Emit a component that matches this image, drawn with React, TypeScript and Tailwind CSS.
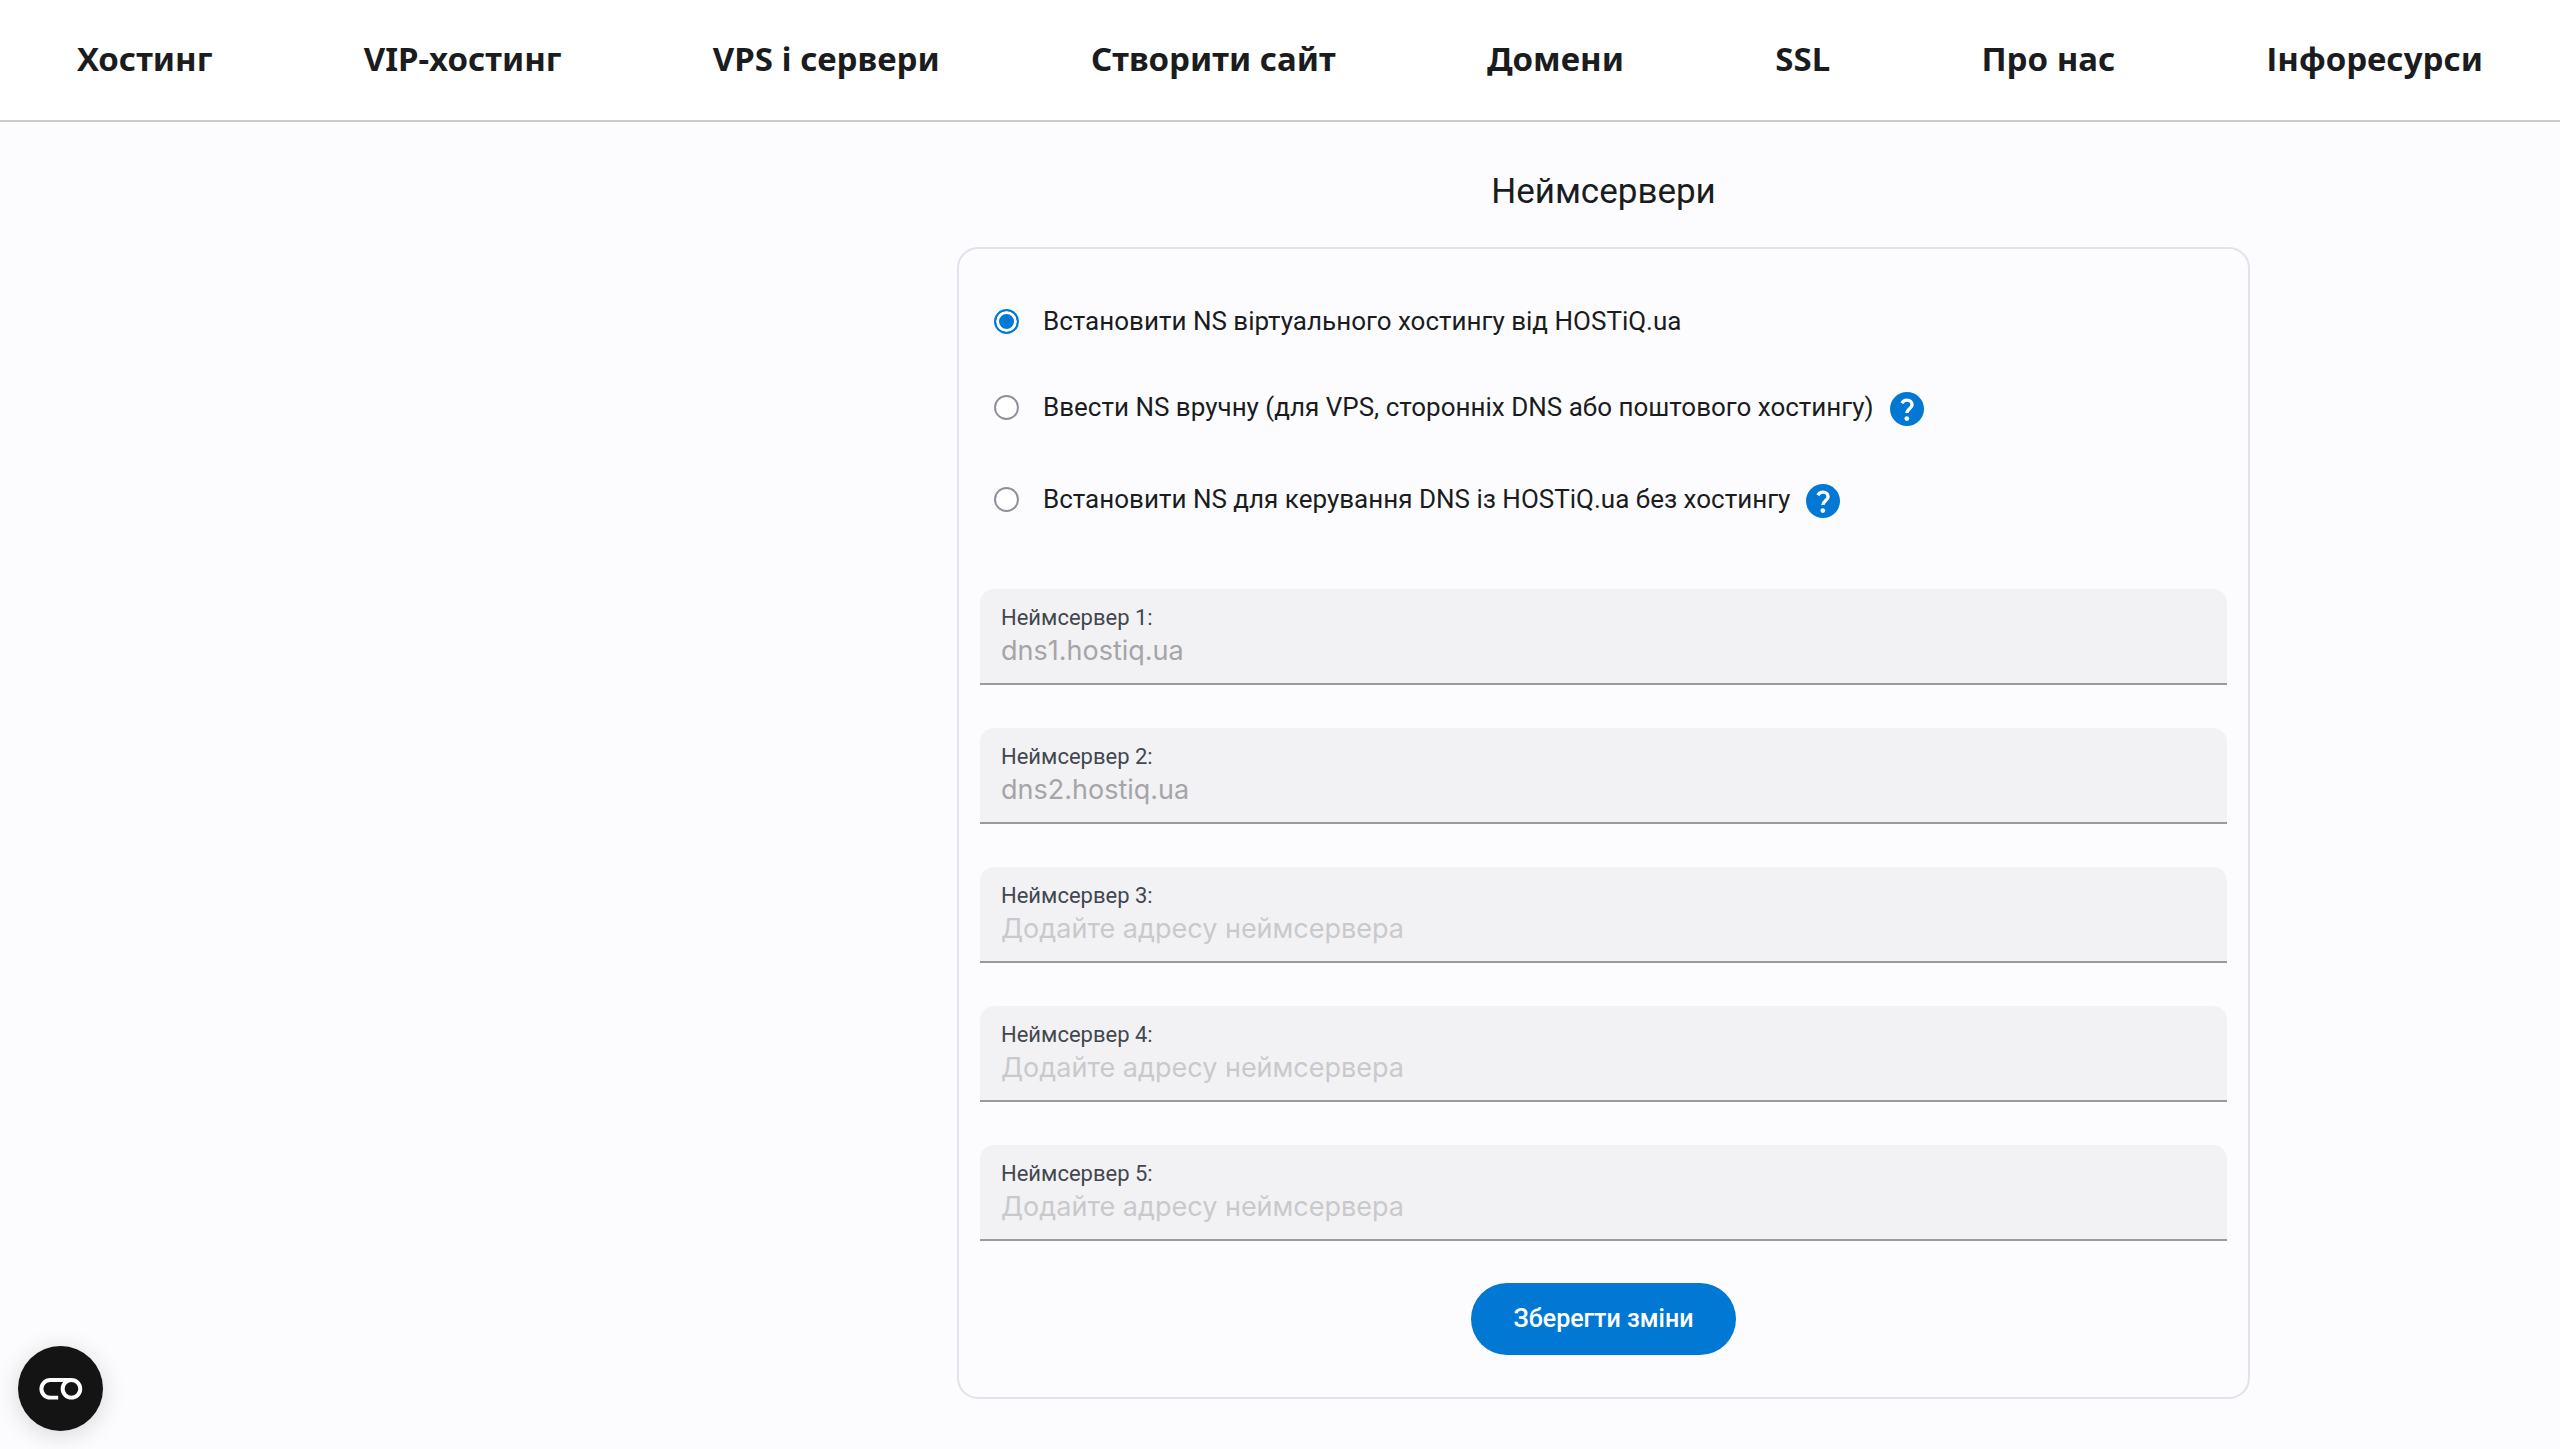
import React from 'react'

const navLinks = [
  'Хостинг',
  'VIP-хостинг',
  'VPS і сервери',
  'Створити сайт',
  'Домени',
  'SSL',
  'Про нас',
  'Інфоресурси',
]

const nsOptions = [
  { id: 'shared', label: 'Встановити NS віртуального хостингу від HOSTiQ.ua', help: false },
  { id: 'manual', label: 'Ввести NS вручну (для VPS, сторонніх DNS або поштового хостингу)', help: true },
  { id: 'dns', label: 'Встановити NS для керування DNS із HOSTiQ.ua без хостингу', help: true },
]

const defaultServers = ['dns1.hostiq.ua', 'dns2.hostiq.ua', '', '', '']

const HelpIcon = () => (
  <svg viewBox="2 2 20 20" className="size-[34px]" fill="none" aria-hidden="true">
    <circle cx="12" cy="12" r="10" fill="#0078d4" />
    <path
      d="M9 8.6C9.6 7.4 10.6 6.8 12 6.8c1.8 0 3 1.100 3 2.700 0 2.200-3.100 2.600-3.100 4.900"
      stroke="#fff"
      strokeWidth="2"
      strokeLinecap="butt"
    />
    <circle cx="11.9" cy="17.6" r="1.4" fill="#fff" />
  </svg>
)

const Header = () => (
  <header className="border-b-2 border-[#cacaca] bg-white">
    <nav className="flex items-center justify-between px-[77px] pt-[35px] pb-[37px]">
      {navLinks.map((link) => (
        <a
          key={link}
          href="#"
          className="font-['Noto_Sans',sans-serif] text-[33px] leading-[48px] font-bold whitespace-nowrap text-[#1a1c1e]"
        >
          {link}
        </a>
      ))}
    </nav>
  </header>
)

type OptionProps = {
  id: string
  label: string
  help: boolean
  checked: boolean
  onSelect: () => void
}

const NsOption = ({ id, label, help, checked, onSelect }: OptionProps) => (
  <div className="flex items-center">
    <input
      type="radio"
      id={id}
      name="ns"
      checked={checked}
      onChange={onSelect}
      className="size-[25px] shrink-0 appearance-none rounded-full border-2 border-[#8f8f9d] bg-white checked:border-[#0078d4] checked:bg-[#0078d4] checked:shadow-[inset_0_0_0_3px_#fff]"
    />
    <label htmlFor={id} className="pl-6 text-[26px] leading-9 text-[#1a1c1e]">
      {label}
    </label>
    {help && (
      <button type="button" aria-label="Довідка" className="flex h-12 shrink-0 items-center pt-1 pl-4">
        <HelpIcon />
      </button>
    )}
  </div>
)

type FieldProps = {
  index: number
  value: string
  onChange: (value: string) => void
}

const NsField = ({ index, value, onChange }: FieldProps) => (
  <div className="flex h-24 flex-col rounded-t-[14px] border-b-2 border-[#9a9a9c] bg-[#f2f2f5] px-[21px] pt-[17px]">
    <label htmlFor={`ns${index}`} className="text-[22px] leading-6 text-[#42474e]">
      Неймсервер {index}:
    </label>
    <input
      type="text"
      id={`ns${index}`}
      value={value}
      placeholder="Додайте адресу неймсервера"
      onChange={(e) => onChange(e.target.value)}
      className="w-full bg-transparent font-['Inter',sans-serif] text-[27px] leading-[42px] text-[#a5a5a7] outline-none placeholder:text-[#c9c9cb]"
    />
  </div>
)

const CookieButton = () => (
  <button
    type="button"
    aria-label="Налаштування cookie"
    className="fixed bottom-[18px] left-[18px] size-[85px] rounded-full bg-[#141414] shadow-[0_4px_24px_rgba(0,0,0,0.15)]"
  >
    <svg viewBox="0 0 256 256" className="size-full" fill="none" stroke="#fff" strokeWidth="12">
      <path d="M161 102.5H97a26.5 26.5 0 0 0 0 53h24" />
      <circle cx="161" cy="129" r="26.5" />
    </svg>
  </button>
)

export default function App() {
  const [selected, setSelected] = React.useState('shared')
  const [servers, setServers] = React.useState(defaultServers)

  const updateServer = (index: number, value: string) => {
    setServers(servers.map((server, i) => (i === index ? value : server)))
  }

  return (
    <div className="min-h-screen bg-[#fcfcff] font-['Roboto',sans-serif]">
      <Header />

      <main className="grid grid-cols-[957fr_1293fr_310fr] pt-[46px] pb-12">
        <section className="col-start-2">
          <h1 className="text-center text-[35px] leading-[48px] text-[#1a1c1e]">Неймсервери</h1>

          <form
            className="mt-[31px] rounded-[21px] border-2 border-[#dfe3eb] px-[21px] pb-[42px]"
            onSubmit={(e) => e.preventDefault()}
          >
            <div className="flex flex-col gap-11 px-[14px] pt-[54px]">
              {nsOptions.map((option) => (
                <NsOption
                  key={option.id}
                  {...option}
                  checked={selected === option.id}
                  onSelect={() => setSelected(option.id)}
                />
              ))}
            </div>

            <div className="mt-[66px] flex flex-col gap-[43px]">
              {servers.map((server, i) => (
                <NsField key={i} index={i + 1} value={server} onChange={(value) => updateServer(i, value)} />
              ))}
            </div>

            <div className="mt-[42px] flex justify-center">
              <button
                type="submit"
                className="h-[72px] rounded-full bg-[#0078d4] px-[43px] text-[25px] font-medium text-white"
              >
                Зберегти зміни
              </button>
            </div>
          </form>
        </section>
      </main>

      <CookieButton />
    </div>
  )
}
